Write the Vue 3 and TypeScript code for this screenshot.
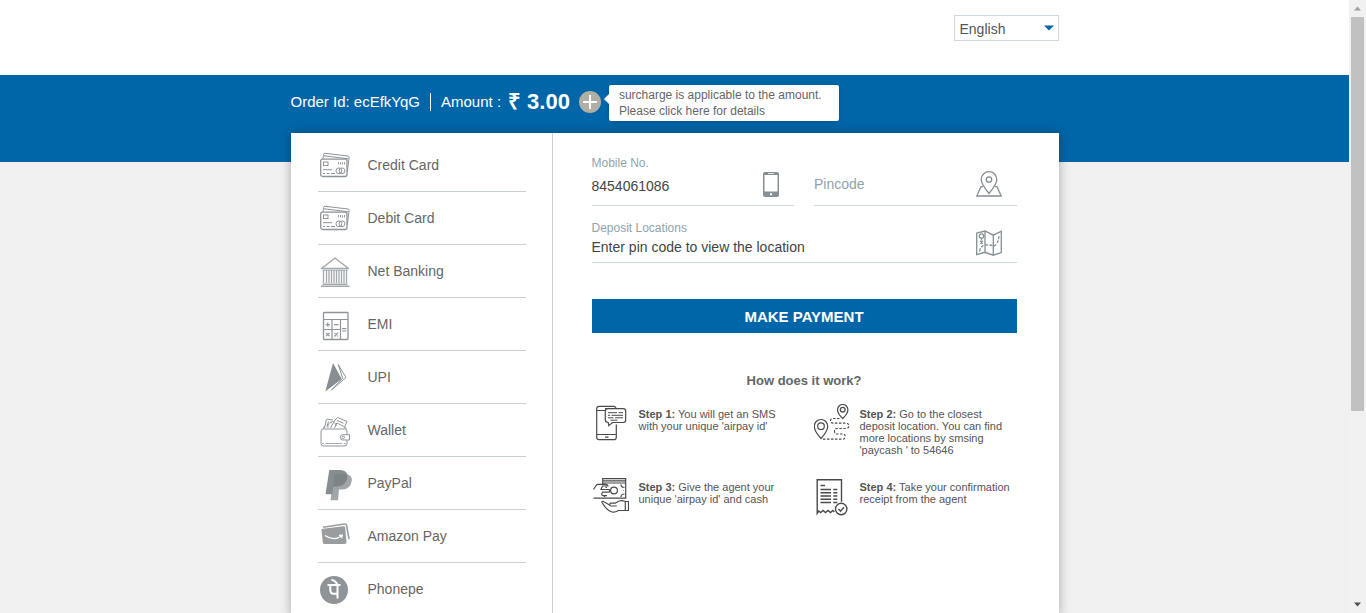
<script setup lang="ts">
import { ref } from 'vue'

interface Method {
  id: string
  label: string
}

interface Step {
  id: string
  title: string
  text: string
}

const language = ref<string>('English')
const mobile = ref<string>('8454061086')
const pincode = ref<string>('')
const deposit = ref<string>('Enter pin code to view the location')
const selected = ref<string>('')

const methods: Method[] = [
  { id: 'credit', label: 'Credit Card' },
  { id: 'debit', label: 'Debit Card' },
  { id: 'bank', label: 'Net Banking' },
  { id: 'emi', label: 'EMI' },
  { id: 'upi', label: 'UPI' },
  { id: 'wallet', label: 'Wallet' },
  { id: 'paypal', label: 'PayPal' },
  { id: 'amazon', label: 'Amazon Pay' },
  { id: 'phonepe', label: 'Phonepe' },
]

const steps: Step[] = [
  { id: 'sms', title: 'Step 1:', text: "You will get an SMS with your unique 'airpay id'" },
  { id: 'route', title: 'Step 2:', text: "Go to the closest deposit location. You can find more locations by smsing 'paycash ' to 54646" },
  { id: 'cash', title: 'Step 3:', text: "Give the agent your unique 'airpay id' and cash" },
  { id: 'receipt', title: 'Step 4:', text: 'Take your confirmation receipt from the agent' },
]
</script>

<template>
  <div class="window">
    <div class="page">
      <header class="top">
        <div class="container top-row">
          <div class="language">
            <select v-model="language" aria-label="Language">
              <option>English</option>
            </select>
            <svg class="caret" viewBox="0 0 10 6" aria-hidden="true"><path d="M0 .5h10L5 5.5z" fill="#0066a8" /></svg>
          </div>
        </div>
      </header>

      <section class="band">
        <div class="container order">
          <span class="order-id">Order Id: ecEfkYqG</span>
          <span class="order-amount">Amount :</span>
          <strong class="rupee">₹</strong>
          <strong class="total">3.00</strong>
          <button class="plus" type="button" aria-label="Show surcharge">
            <svg viewBox="0 0 22 22" aria-hidden="true">
              <circle cx="11" cy="11" r="11" fill="#b1aea4" />
              <path d="M11 4v14M4 11h14" stroke="#fff" stroke-width="2" />
            </svg>
          </button>
          <a class="tip" href="#surcharge">surcharge is applicable to the amount. Please click here for details</a>
        </div>
      </section>

      <main class="container card">
        <nav class="methods" aria-label="Payment methods">
          <button v-for="m in methods" :key="m.id" type="button" class="method" @click="selected = m.id">
            <svg class="method-icon" viewBox="0 0 30 30" aria-hidden="true">
              <g v-if="m.id === 'credit' || m.id === 'debit'" fill="none" stroke="#8d9499">
                <path d="M3 9l.5-4.500q.2-1.400 1.600-1.200L28 6q1.300.2 1.100 1.500L27.300 22M4 5.800L28.500 8.800" />
                <rect x=".7" y="9.200" width="26.300" height="17.300" rx="2" stroke-width="1.300" />
                <rect x="3.500" y="12" width="4.500" height="3.500" />
                <path d="M18.500 12v2.500M20.500 12v2.500M22.500 12v2.500M24.500 12v2.500" stroke-width=".9" />
                <path d="M3 19.700h9M3 23.500h2M6.500 23.500h3M11 23.500h4" />
                <circle cx="18.900" cy="20.800" r="2.900" /><circle cx="22" cy="20.800" r="2.900" />
              </g>
              <g v-else-if="m.id === 'bank'" fill="none" stroke="#a3a8ac">
                <path d="M1.500 12.500L15 2l13.500 10.500z" stroke-width="1.500" stroke-linejoin="round" />
                <path d="M3.500 14v13M6.500 14v13M9 14v13M11.500 14v13M14 14v13M16.500 14v13M19 14v13M21.500 14v13M24 14v13M26.500 14v13" stroke-width="1.300" />
                <path d="M2.500 28.300h25M1 30.200h28.500" stroke-width="1.400" />
                <path d="M2.500 14.200h25" />
              </g>
              <g v-else-if="m.id === 'emi'" fill="none" stroke="#8f9599">
                <rect x="3.500" y="3.500" width="24.500" height="27" rx=".8" stroke-width="1.300" />
                <path d="M3.500 10.500H28M12 10.500V30M20.500 10.500V30M3.500 20.500h17" stroke-width="1.200" />
                <path d="M5.700 15.700h4.200M7.800 13.600v4.200M14 15.700h4.500M22 19.700h4.300M22 22h4.300M6.200 24l3.200 3.200M9.400 24l-3.200 3.200M14.500 27.500l3.500-3.800M14.200 24.300h1.300M17 27h1.300" stroke-width="1.200" />
              </g>
              <g v-else-if="m.id === 'upi'">
                <path d="M13 1l8.700 16L5.300 29.500z" fill="#868e92" />
                <path d="M18.200 2.500L26 15.500 11.500 28l11.200-11.700z" fill="none" stroke="#8c9498" stroke-width="1" />
              </g>
              <g v-else-if="m.id === 'wallet'" fill="none" stroke="#8f969a">
                <path d="M4.500 13L6.300 5q.3-1 1.300-.8l5.400.8M8 13q-1-5 3.500-5.500M8.500 6.500l-1.500 5M10.500 13l4.500-8 2.500-2.500L27 6.500 24 13M14.500 13l2.200-5 7.500 3.500M17 5.500l6.500 2.700M10.500 7q4-1.500 6 4" />
                <path d="M27 20v-4q0-2-2-2H3.500Q1 14 1 16.500v12Q1 31 3.500 31H25q2 0 2-2.500V25M4 14q-2-2 1-2.500M25 12q1.500.5 1 2" />
                <path d="M29.500 19.700h-6.700q-2.500 0-2.500 2.700 0 2.600 2.500 2.600h6.700z" />
                <circle cx="23.300" cy="22.400" r="1.200" />
                <path d="M2 28.500h2M5.500 28.500H22M23.500 28.500h2" stroke-width=".8" />
              </g>
              <g v-else-if="m.id === 'paypal'">
                <path d="M14 6h12.500q6 1.500 5.200 7-1.200 8.500-9.700 8.500h-3L18 32.300h-7.500z" fill="#a1a6a9" />
                <path d="M9.300 2h11.500q7.200.5 6.500 7-1 9.500-10.300 9.500h-3.500L12.300 26.300H5.500z" fill="#858e91" />
                <path d="M14.500 6.500q7-1.500 12.700 0 .5 9-7 11-3 1-7 1z" fill="#7c8487" />
              </g>
              <g v-else-if="m.id === 'amazon'">
                <path d="M3 6.200L24.500 3q1.700-.2 2.100 1.500L29 18" fill="none" stroke="#999da0" stroke-width="1.600" />
                <path d="M1.500 9q0-1.200 1.200-1.300L23.500 5.200q1.500-.1 1.700 1.300L26.500 21q.1 2-1.700 2H4.500Q3 23 2.800 21.500z" fill="#999da0" />
                <path d="M5 14.500q8.500 6 16.500.5M19 14.300l3.200-.2-.7 3" fill="none" stroke="#fff" stroke-width="1.300" />
              </g>
              <g v-else>
                <circle cx="14" cy="16" r="14" fill="#8e9498" />
                <path d="M7.500 11h13M17.500 11v13.500M10.300 11v5.500q.2 3.300 3.400 3.300h3.800M11.500 5.800q4 .8 6 5" fill="none" stroke="#fff" stroke-width="2" />
              </g>
            </svg>
            <span>{{ m.label }}</span>
          </button>
        </nav>

        <section class="panel">
          <form @submit.prevent>
            <div class="pair">
              <div class="field">
                <div class="entry">
                  <label for="mobile">Mobile No.</label>
                  <input id="mobile" v-model="mobile" type="tel">
                </div>
                <svg class="field-icon phone" viewBox="0 0 16 25" aria-hidden="true">
                  <rect width="16" height="25" rx="2" fill="#858f94" />
                  <path d="M1.500 3h13v16.500h-13zM5 1.200h6v.9H5zM7 21.300h2v2H7z" fill="#fff" />
                </svg>
              </div>
              <div class="field">
                <div class="entry">
                  <input id="pincode" v-model="pincode" class="tall" type="text" placeholder="Pincode" aria-label="Pincode">
                </div>
                <svg class="field-icon" viewBox="0 0 26 26" fill="none" stroke="#858f94" stroke-width="1.300" aria-hidden="true">
                  <path d="M13 22.500Q5.200 13 5.200 8.500a7.800 7.800 0 0 1 15.600 0Q20.800 13 13 22.500z" />
                  <circle cx="13" cy="8.500" r="2.700" />
                  <path d="M7 15.700H5L.8 25h24.400L21 15.700h-2" />
                </svg>
              </div>
            </div>

            <div class="field">
              <div class="entry">
                <label for="deposit">Deposit Locations</label>
                <input id="deposit" v-model="deposit" class="short" type="text">
              </div>
              <svg class="field-icon map" viewBox="0 0 26 26" fill="none" stroke="#858f94" stroke-width="1.300" aria-hidden="true">
                <path d="M.7 3.200L9 1l8.300 4.200 8-4V22.500l-8 2.700L9 22.300.7 24.700zM9 1v21.300M17.300 5.200v20" />
                <circle cx="5.500" cy="6" r="2.200" />
                <path d="M5.500 8.500v2M4.200 11l2.600 2.500M6.800 11l-2.600 2.500" />
                <path d="M3.500 21.500Q4.500 15.500 9.500 15t8 1.200q4.500-1.500 5.500-10" stroke-dasharray="3 1.500" />
              </svg>
            </div>

            <button class="pay" type="submit">MAKE PAYMENT</button>
          </form>

          <h2>How does it work?</h2>

          <div class="steps">
            <div v-for="s in steps" :key="s.id" class="step">
              <svg class="step-icon" viewBox="0 0 36 40" fill="none" stroke="#4a4a4a" stroke-width="1.200" aria-hidden="true">
                <g v-if="s.id === 'sms'">
                  <path d="M23.300 20.500v12.700q0 2.500-2.500 2.500H6.200q-2.500 0-2.500-2.500V4.800q0-2.500 2.500-2.500h14.600q2 0 2.400 2.200M3.700 6.500h8.500M3.700 30.500h19.600M12 33.200h3.500M12 4.500h3" />
                  <path d="M14.800 4.700h15.500q2.400 0 2.400 2.400v9q0 2.400-2.400 2.400H19.500l-3.700 3.200-.6-3.200q-2.900 0-2.900-2.400v-9q0-2.400 2.500-2.400z" />
                  <path d="M15 8.700h9M25.500 8.700h4.500M15 11.300h2M18.500 11.300H30M15 13.800h5.500M22 13.800h8M17.500 16.200h7" stroke-width="1" />
                </g>
                <g v-else-if="s.id === 'route'">
                  <path d="M28.700 14.500Q23.500 9.500 23.500 5.700a5.200 5.200 0 0 1 10.400 0Q33.900 9.500 28.700 14.500z" /><circle cx="28.700" cy="5.800" r="2.400" />
                  <path d="M7 34.500Q.3 27 .3 22.200a6.700 6.700 0 0 1 13.400 0Q13.700 27 7 34.500z" /><circle cx="7" cy="22.200" r="3.300" />
                  <path d="M25.500 14.500H19q-2.500 0-2.500 2.300t2.500 2.300h13q2.800 0 2.800 2.700t-2.800 2.700H23q-2.500 0-2.500 2.700T23 30h5.500q2.700 0 2.700 2.600t-2.700 2.600H8" stroke-dasharray="2.500 1.500" />
                </g>
                <g v-else-if="s.id === 'cash'">
                  <path d="M9.700 7V1.700h23V21.200H.5M9.700 3.800h23M9.700 6h23M.5 12.500l2.700-4.200q.7-1 2-1H12M12 7.300q3 .2 3 1.700H9.500l-1.500 3.500h8q1.500 1.300 0 2.700H9.500q-1.700 3 .7 3.500H14" />
                  <circle cx="21" cy="13.500" r="3.400" />
                  <path d="M28 7.500q0 3 3.500 3M28 20q0-3 3.500-3M11.500 20v-1M30 13.500h.5M12.500 10.500h1.500" />
                  <path d="M32.300 24.500h3.200v9h-3.200zM32.300 24.500q-4.500-2-8 .5l-2 1.200h-4.800q-2 1.700.3 2.800h6M17.500 28.500l-7-4q-2-.5-1.500 1 5 8.500 10 9.500 3 .7 6.500-1.500h6.800" />
                </g>
                <g v-else>
                  <path d="M20.500 35l-1.700-1.500-2.300 2-2.500-2-2.500 2-2.500-2-2.300 2-2-1.500-1.500 2.300V2.700h24.300v22" stroke-width="1.400" />
                  <path d="M6.500 8.500H11M6.500 12.500H17M6.500 15.700H17M6.500 19H17M6.500 22.200H17M6.500 25.500H17M19.300 12.500h4M19.300 15.700h4M19.300 19h4M19.300 22.200h4M19.300 25.500h4" stroke-width="1.400" />
                  <circle cx="27.200" cy="32" r="5.700" stroke-width="1.400" /><path d="M24.500 32l2 2.200 3.500-4" stroke-width="1.400" />
                </g>
              </svg>
              <p><strong>{{ s.title }}</strong> {{ s.text }}</p>
            </div>
          </div>
        </section>
      </main>
    </div>

    <div class="scrollbar" aria-hidden="true">
      <svg viewBox="0 0 17 17"><path d="M8.500 6.500L12 10.500H5z" fill="#a0a0a0" /></svg>
      <div class="track"><div class="thumb"></div></div>
      <svg viewBox="0 0 17 17"><path d="M5 6.500h7l-3.500 4z" fill="#505050" /></svg>
    </div>
  </div>
</template>

<style>
body {
  margin: 0;
  background: #f0f0f0;
}
</style>

<style scoped>
.window {
  display: flex;
  height: 100vh;
  overflow: hidden;
  font-family: "Liberation Sans", Arial, sans-serif;
  font-size: 14px;
  color: #666;
}

.window * {
  box-sizing: border-box;
}

button,
input,
select {
  font-family: inherit;
  border: 0;
  padding: 0;
  margin: 0;
}

.page {
  flex: 1;
  min-width: 0;
  display: flex;
  flex-direction: column;
  background: #f0f0f0;
}

.container {
  width: 100%;
  max-width: 768px;
  margin: 0 auto;
}

.top {
  flex: none;
  height: 75px;
  padding-top: 15px;
  background: #fff;
}

.top-row {
  display: flex;
  justify-content: flex-end;
}

.language {
  position: relative;
  width: 105px;
}

.language select {
  appearance: none;
  display: block;
  width: 100%;
  height: 26px;
  padding: 2px 20px 0 5px;
  border: 1px solid #ced9de;
  border-radius: 0;
  background: #fff;
  color: #555;
  font-size: 14px;
}

.caret {
  position: absolute;
  top: 10px;
  right: 5px;
  width: 10px;
  height: 6px;
  pointer-events: none;
}

.band {
  flex: none;
  height: 87px;
  background: #0066a8;
}

.order {
  display: flex;
  align-items: center;
  height: 54px;
  color: #fff;
  font-size: 15px;
  line-height: 18px;
  white-space: nowrap;
}

.order-id {
  padding-right: 10px;
  border-right: 1px solid #fff;
}

.order-amount {
  padding: 0 7px 0 10px;
}

.rupee,
.total {
  font-size: 22px;
}

.rupee {
  margin-right: 6px;
}

.plus {
  width: 22px;
  height: 22px;
  margin: 0 8px 0 9px;
  background: none;
}

.plus svg {
  display: block;
}

.tip {
  position: relative;
  width: 230px;
  margin-top: 2px;
  padding: 2px 10px;
  border-radius: 2px;
  background: #fff;
  box-shadow: 0 1px 4px rgba(0, 0, 0, .2);
  color: #666;
  font-size: 12px;
  line-height: 16px;
  text-decoration: none;
  white-space: normal;
}

.tip::before {
  content: "";
  position: absolute;
  top: 9px;
  left: -5px;
  border: 5px solid transparent;
  border-right-color: #fff;
  border-left: 0;
}

.card {
  flex: 1 0 auto;
  display: flex;
  margin-top: -29px;
  background: #fff;
  box-shadow: 0 0 10px rgba(0, 0, 0, .3);
}

.methods {
  flex: none;
  width: 262px;
  padding: 6px 26px 0 27px;
  border-right: 1px solid #c8d0d4;
}

.method {
  display: flex;
  align-items: center;
  gap: 18px;
  width: 100%;
  height: 53px;
  padding-left: 2px;
  border-bottom: 1px solid #c8d0d4;
  background: none;
  color: #666;
  font-size: 14px;
  text-align: left;
}

.method-icon {
  width: 30px;
  height: 30px;
  overflow: visible;
}

.panel {
  flex: 1;
  min-width: 0;
  padding: 22px 42px 0 39px;
}

.pair {
  display: grid;
  grid-template-columns: 1fr 1fr;
  gap: 20px;
  margin-bottom: 14px;
}

.field {
  display: flex;
  align-items: flex-end;
  padding-right: 15px;
  border-bottom: 1px solid #ced9de;
}

.entry {
  flex: 1;
  min-width: 0;
}

.entry label {
  display: block;
  color: #8fa3ae;
  font-size: 12px;
  line-height: 16px;
}

.entry input {
  display: block;
  width: 100%;
  height: 30px;
  margin-bottom: 4px;
  background: none;
  color: #444;
  font-size: 14px;
  outline: 0;
}

.entry input.short {
  height: 22px;
}

.entry input.tall {
  height: 42px;
  margin-bottom: 0;
}

.entry input::placeholder {
  color: #8fa3ae;
  opacity: 1;
}

.field-icon {
  flex: none;
  width: 26px;
  height: 26px;
  margin-bottom: 8px;
}

.phone {
  width: 16px;
  height: 25px;
}

.map {
  margin-bottom: 6px;
}

.pay {
  display: block;
  width: 100%;
  height: 34px;
  margin-top: 36px;
  background: #0066a8;
  color: #fff;
  font-size: 15px;
  font-weight: bold;
}

h2 {
  margin: 40px 0 15px;
  font-size: 13px;
  line-height: 16px;
  text-align: center;
}

.steps {
  display: grid;
  grid-template-columns: 1fr 1fr;
  gap: 19px 17px;
}

.step {
  display: flex;
  align-items: flex-start;
  gap: 10px;
  min-height: 54px;
  padding: 0 3px 0 1px;
}

.step-icon {
  flex: none;
  width: 36px;
  height: 40px;
}

.step p {
  margin: 4px 0 0;
  font-size: 11px;
  line-height: 12px;
  color: #555;
}

.scrollbar {
  flex: none;
  display: flex;
  flex-direction: column;
  width: 17px;
  background: #f1f1f1;
}

.scrollbar svg {
  flex: none;
  width: 17px;
  height: 17px;
}

.track {
  flex: 1;
  padding: 0 2px;
}

.thumb {
  height: 68%;
  background: #c1c1c1;
}
</style>
